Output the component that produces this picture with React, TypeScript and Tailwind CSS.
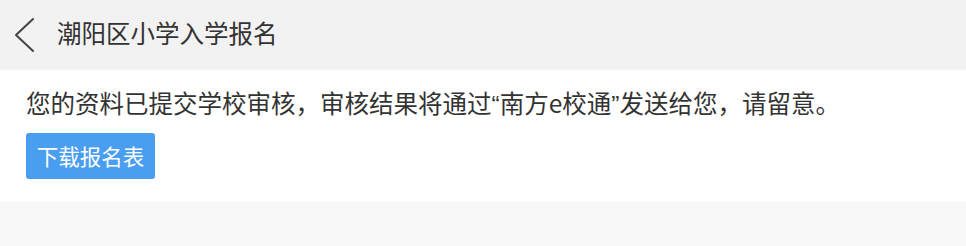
export default function App() {
  return (
    <div
      className="min-h-[246px] bg-[#f8f8f8] text-[#333]"
      style={{ fontFamily: '"Noto Sans CJK SC", "Noto Sans", sans-serif' }}
    >
      <header className="h-[70px] bg-[#f2f2f2] flex items-center">
        <button className="w-[57px] h-full flex items-center pl-[14px]">
          <svg width="22" height="36" viewBox="0 0 22 36" fill="none">
            <polyline
              points="19,2 2,18 19,34"
              stroke="#444"
              strokeWidth="2"
              strokeLinecap="round"
              strokeLinejoin="round"
            />
          </svg>
        </button>
        <h1 className="text-[24.5px] leading-none -mt-[4px] text-[#333]">潮阳区小学入学报名</h1>
      </header>
      <section className="bg-white px-[26px] pt-[16px] pb-[23px]">
        <p className="text-[24.5px] leading-[34px] text-[#333]">
          您的资料已提交学校审核，审核结果将通过
          <span className="font-['Liberation_Sans',sans-serif] leading-none">“</span>南方e校通
          <span className="font-['Liberation_Sans',sans-serif] leading-none">”</span>发送给您，请留意。
        </p>
        <button className="mt-[13px] w-[129px] h-[46px] rounded-[3px] bg-[#4a9ef0] text-white text-[21.5px] flex items-center justify-center">
          下载报名表
        </button>
      </section>
    </div>
  )
}
